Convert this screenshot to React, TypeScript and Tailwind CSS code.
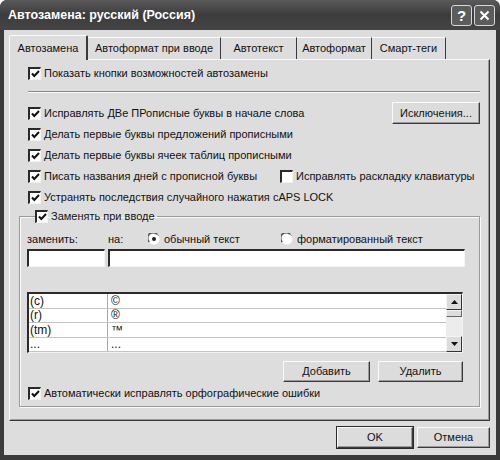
import React from 'react';

const Check: React.FC<{ checked?: boolean }> = ({ checked = true }) => (
  <span className="w-[13px] h-[13px] shrink-0 bg-white border-t-2 border-l-2 border-t-[#2a2a2a] border-l-[#2a2a2a] border-b border-r border-b-[#f2f2f2] border-r-[#f2f2f2] flex items-center justify-center">
    {checked && (
      <svg width="9" height="8" viewBox="0 0 9 8">
        <path d="M1 3.5 L3.3 6 L8 1" stroke="#111" strokeWidth="2" fill="none" />
      </svg>
    )}
  </span>
);

const CheckRow: React.FC<{ label: string; checked?: boolean }> = ({ label, checked = true }) => (
  <label className="flex items-center gap-[3px] whitespace-nowrap">
    <Check checked={checked} />
    <span>{label}</span>
  </label>
);

const Radio: React.FC<{ selected?: boolean }> = ({ selected }) => (
  <svg width="12" height="12" viewBox="0 0 12 12" className="shrink-0">
    <circle cx="6" cy="6" r="5.5" fill="#fff" />
    <path d="M1.2 9 A5 5 0 0 1 9 1.2" stroke="#555" strokeWidth="1.6" fill="none" />
    <path d="M9 1.2 A5 5 0 0 1 10.8 3" stroke="#999" strokeWidth="1" fill="none" />
    {selected && <circle cx="6" cy="6" r="2" fill="#222" />}
  </svg>
);

const Button: React.FC<{ label: string; w: string; def?: boolean }> = ({ label, w, def }) => (
  <button
    className={
      w +
      ' h-[21px] text-[11px] text-[#111] bg-[#dcdcdc] flex items-center justify-center border border-t-[#fafafa] border-l-[#fafafa] border-r-[#3a3a3a] border-b-[#3a3a3a] shadow-[inset_-1px_-1px_0_#9a9a9a] ' +
      (def ? 'outline outline-1 outline-[#2a2a2a]' : '')
    }
  >
    {label}
  </button>
);

const tabs = [
  { label: 'Автозамена', w: 'w-[79px]' },
  { label: 'Автоформат при вводе', w: 'w-[133px]' },
  { label: 'Автотекст', w: 'w-[76px]' },
  { label: 'Автоформат', w: 'w-[75px]' },
  { label: 'Смарт-теги', w: 'w-[74px]' },
];

const entries = [
  ['(c)', '©'],
  ['(r)', '®'],
  ['(tm)', '™'],
  ['...', '...'],
];

const ScrollBtn: React.FC<{ up?: boolean }> = ({ up }) => (
  <div className="w-[16px] h-[16px] bg-[#dcdcdc] border border-t-[#f4f4f4] border-l-[#f4f4f4] border-r-[#333] border-b-[#333] flex items-center justify-center">
    <svg width="7" height="4" viewBox="0 0 7 4">
      <path d={up ? 'M0 4 L3.5 0 L7 4 Z' : 'M0 0 L3.5 4 L7 0 Z'} fill="#111" />
    </svg>
  </div>
);

export default function App() {
  return (
    <div className="w-[500px] h-[460px] bg-[#3a3a3a] rounded-t-[7px] flex flex-col font-['Liberation_Sans',Arial,sans-serif] text-[11px] text-[#111]">
      <div className="h-[30px] shrink-0 flex items-center justify-between pl-[8px] pr-[5px] rounded-t-[7px] bg-gradient-to-b from-[#5a5a5a] via-[#3c3c3c] to-[#454545]">
        <span className="text-white font-bold text-[12.5px]">Автозамена: русский (Россия)</span>
        <div className="flex gap-[2px]">
          <div className="w-[21px] h-[21px] rounded-[3px] border border-[#d8d8d8] bg-[#5c5c5c] flex items-center justify-center text-white font-bold text-[15px] leading-none">?</div>
          <div className="w-[21px] h-[21px] rounded-[3px] border border-[#d8d8d8] bg-[#5c5c5c] flex items-center justify-center">
            <svg width="11" height="11" viewBox="0 0 11 11">
              <path d="M1.5 1.5 L9.5 9.5 M9.5 1.5 L1.5 9.5" stroke="#fff" strokeWidth="2" />
            </svg>
          </div>
        </div>
      </div>

      <div className="mx-[4px] h-[425px] bg-[#dddddd] flex flex-col pl-[5px] pr-[5px] pt-[5px]">
        <div className="h-[24px] flex items-end">
          {tabs.map((t, i) =>
            i === 0 ? (
              <div
                key={t.label}
                className={t.w + ' h-[25px] -mb-[1px] relative z-10 bg-[#dddddd] border-l border-t border-[#fafafa] border-r-2 border-r-[#3a3a3a] rounded-t-[2px] flex items-center justify-center'}
              >
                {t.label}
              </div>
            ) : (
              <div
                key={t.label}
                className={t.w + ' h-[22px] border-t border-t-[#fafafa] border-r border-r-[#3a3a3a] flex items-center justify-center'}
              >
                {t.label}
              </div>
            )
          )}
        </div>

        <div className="w-[481px] h-[362px] border-l border-t border-[#fafafa] border-r border-b border-r-[#3a3a3a] border-b-[#3a3a3a] shadow-[inset_-1px_-1px_0_#9a9a9a] px-[9px] pt-[3px] flex flex-col">
          <div className="h-[21px] pl-[9px] flex items-center">
            <CheckRow label="Показать кнопки возможностей автозамены" />
          </div>
          <div className="mt-[7px] ml-[9px] h-[2px] border-t border-t-[#8a8a8a] border-b border-b-[#fafafa]" />
          <div className="mt-[9px] h-[22px] pl-[9px] flex items-center justify-between">
            <CheckRow label="Исправлять ДВе ПРописные буквы в начале слова" />
            <Button label="Исключения..." w="w-[88px] h-[22px]" />
          </div>
          <div className="h-[21px] pl-[9px] flex items-center">
            <CheckRow label="Делать первые буквы предложений прописными" />
          </div>
          <div className="h-[21px] pl-[9px] flex items-center">
            <CheckRow label="Делать первые буквы ячеек таблиц прописными" />
          </div>
          <div className="h-[21px] pl-[9px] flex items-center">
            <div className="w-[252px]">
              <CheckRow label="Писать названия дней с прописной буквы" />
            </div>
            <CheckRow label="Исправлять раскладку клавиатуры" checked={false} />
          </div>
          <div className="h-[21px] pl-[9px] flex items-center">
            <CheckRow label="Устранять последствия случайного нажатия cAPS LOCK" />
          </div>

          <fieldset className="mt-[1px] h-[198px] border border-[#9a9a9a] shadow-[1px_1px_0_#fafafa,inset_1px_1px_0_#fafafa] pl-[7px] pr-[14px] flex flex-col">
            <legend className="ml-[8px] pr-[2px] h-[15px] flex items-center">
              <CheckRow label="Заменять при вводе" />
            </legend>
            <div className="mt-[8px] h-[14px] flex items-center">
              <span className="w-[81px]">заменить:</span>
              <span className="w-[40px]">на:</span>
              <span className="w-[133px] flex items-center gap-[4px]">
                <Radio selected />
                <span>обычный текст</span>
              </span>
              <span className="flex items-center gap-[4px]">
                <Radio />
                <span>форматированный текст</span>
              </span>
            </div>
            <div className="mt-[3px] h-[18px] flex gap-[3px]">
              <div className="w-[78px] bg-white border-t-2 border-l-2 border-t-[#2a2a2a] border-l-[#2a2a2a] border-b border-r border-b-[#f4f4f4] border-r-[#f4f4f4]" />
              <div className="flex-1 bg-white border-t-2 border-l-2 border-t-[#2a2a2a] border-l-[#2a2a2a] border-b border-r border-b-[#f4f4f4] border-r-[#f4f4f4]" />
            </div>
            <div className="mt-[25px] mr-[2px] h-[61px] bg-white border-t-2 border-l-2 border-t-[#2a2a2a] border-l-[#2a2a2a] border-b border-r border-b-[#f4f4f4] border-r-[#f4f4f4] flex">
              <div className="flex-1 flex flex-col">
                {entries.map(([a, b]) => (
                  <div key={a} className="h-[14.5px] flex border-b border-b-[#c4c4c4] leading-none text-[12px]">
                    <span className="w-[79px] border-r border-r-[#a8a8a8] pl-[1px] flex items-center">{a}</span>
                    <span className="pl-[3px] flex items-center">{b}</span>
                  </div>
                ))}
              </div>
              <div className="w-[16px] flex flex-col bg-[#ececec]">
                <ScrollBtn up />
                <div className="h-[7px] bg-[#dcdcdc] border border-t-[#f4f4f4] border-l-[#f4f4f4] border-r-[#666] border-b-[#666]" />
                <div className="flex-1" />
                <ScrollBtn />
              </div>
            </div>
            <div className="mt-[8px] flex justify-end gap-[8px] mr-[2px]">
              <Button label="Добавить" w="w-[87px]" />
              <Button label="Удалить" w="w-[85px]" />
            </div>
            <div className="mt-[4px] h-[15px] pl-[1px] flex items-center">
              <CheckRow label="Автоматически исправлять орфографические ошибки" />
            </div>
          </fieldset>
        </div>

        <div className="mt-[6px] flex justify-end gap-[4px] pr-[1px]">
          <Button label="OK" w="w-[76px]" def />
          <Button label="Отмена" w="w-[73px]" />
        </div>
      </div>
    </div>
  );
}
